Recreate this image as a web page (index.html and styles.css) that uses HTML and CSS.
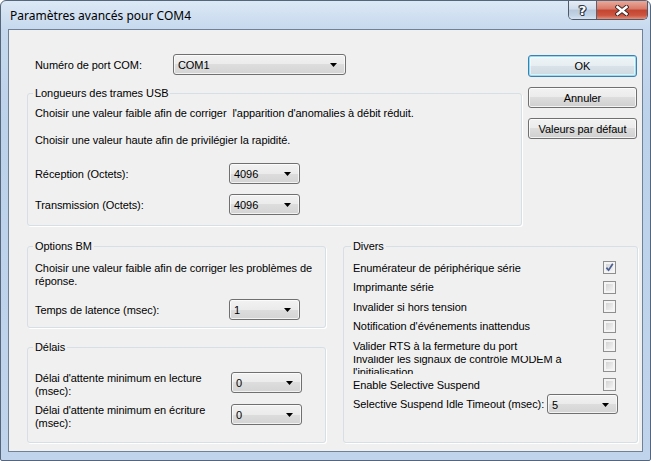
FILE: index.html
```html
<!DOCTYPE html>
<html lang="fr">
<head>
<meta charset="utf-8">
<title>Paramètres avancés pour COM4</title>
<link rel="stylesheet" href="styles.css">
</head>
<body>
<div class="window">
  <div class="titlebar">
    <span class="title">Paramètres avancés pour COM4</span>
    <div class="caption-btns">
      <div class="cbtn help"><span>?</span></div>
      <div class="cbtn close">
        <svg width="14" height="11" viewBox="0 0 14 11"><path d="M2.5 2 L11.5 9 M11.5 2 L2.5 9" stroke="#3b2a2a" stroke-width="4.4" stroke-linecap="square" fill="none"/><path d="M2.5 2 L11.5 9 M11.5 2 L2.5 9" stroke="#fff" stroke-width="2.4" stroke-linecap="square" fill="none"/></svg>
      </div>
    </div>
  </div>
  <div class="client">
    <div class="top">
      <div class="top-left">
        <div class="port-row">
          <span class="port-label">Numéro de port COM:</span>
          <div class="combo combo-wide"><span>COM1</span><svg class="arrow" width="7" height="4" viewBox="0 0 7 4"><path d="M0 0 H7 L3.5 4 Z" fill="#000"/></svg></div>
        </div>
        <fieldset class="group usb">
          <legend>Longueurs des trames USB</legend>
          <p class="line">Choisir une valeur faible afin de corriger &nbsp;l'apparition d'anomalies à débit réduit.</p>
          <p class="line second">Choisir une valeur haute afin de privilégier la rapidité.</p>
          <div class="row row-first">
            <span class="row-label">Réception (Octets):</span>
            <div class="combo"><span>4096</span><svg class="arrow" width="7" height="4" viewBox="0 0 7 4"><path d="M0 0 H7 L3.5 4 Z" fill="#000"/></svg></div>
          </div>
          <div class="row row-next">
            <span class="row-label">Transmission (Octets):</span>
            <div class="combo"><span>4096</span><svg class="arrow" width="7" height="4" viewBox="0 0 7 4"><path d="M0 0 H7 L3.5 4 Z" fill="#000"/></svg></div>
          </div>
        </fieldset>
      </div>
      <div class="buttons">
        <div class="btn btn-default">OK</div>
        <div class="btn">Annuler</div>
        <div class="btn">Valeurs par défaut</div>
      </div>
    </div>
    <div class="bottom">
      <div class="col-left">
        <fieldset class="group bm">
          <legend>Options BM</legend>
          <p class="line">Choisir une valeur faible afin de corriger les problèmes de<br>réponse.</p>
          <div class="row row-latency">
            <span class="row-label">Temps de latence (msec):</span>
            <div class="combo"><span>1</span><svg class="arrow" width="7" height="4" viewBox="0 0 7 4"><path d="M0 0 H7 L3.5 4 Z" fill="#000"/></svg></div>
          </div>
        </fieldset>
        <fieldset class="group delais">
          <legend>Délais</legend>
          <div class="trow">
            <span class="trow-label">Délai d'attente minimum en lecture<br>(msec):</span>
            <div class="combo"><span>0</span><svg class="arrow" width="7" height="4" viewBox="0 0 7 4"><path d="M0 0 H7 L3.5 4 Z" fill="#000"/></svg></div>
          </div>
          <div class="trow trow-next">
            <span class="trow-label">Délai d'attente minimum en écriture<br>(msec):</span>
            <div class="combo"><span>0</span><svg class="arrow" width="7" height="4" viewBox="0 0 7 4"><path d="M0 0 H7 L3.5 4 Z" fill="#000"/></svg></div>
          </div>
        </fieldset>
      </div>
      <fieldset class="group divers">
        <legend>Divers</legend>
        <div class="crow"><span>Enumérateur de périphérique série</span><span class="cb checked"><svg width="9" height="9" viewBox="0 0 9 9"><path d="M1.4 4.6 L3.6 7.2 L7.8 0.8" stroke="#4b5f95" stroke-width="1.7" fill="none"/></svg></span></div>
        <div class="crow"><span>Imprimante série</span><span class="cb"></span></div>
        <div class="crow"><span>Invalider si hors tension</span><span class="cb"></span></div>
        <div class="crow"><span>Notification d'événements inattendus</span><span class="cb"></span></div>
        <div class="crow"><span>Valider RTS à la fermeture du port</span><span class="cb"></span></div>
        <div class="crow"><div class="clip"><div class="clip-text">Invalider les signaux de contrôle MODEM à<br>l'initialisation</div></div><span class="cb"></span></div>
        <div class="crow"><span>Enable Selective Suspend</span><span class="cb"></span></div>
        <div class="crow"><span>Selective Suspend Idle Timeout (msec):</span>
          <div class="combo combo-sel"><span>5</span><svg class="arrow" width="7" height="4" viewBox="0 0 7 4"><path d="M0 0 H7 L3.5 4 Z" fill="#000"/></svg></div>
        </div>
      </fieldset>
    </div>
  </div>
</div>
</body>
</html>
```
FILE: styles.css
```css
* { box-sizing: border-box; }

body {
  margin: 0;
  background: #ffffff;
  font-family: "Liberation Sans", Arial, sans-serif;
  font-size: 11px;
  letter-spacing: -0.07px;
  color: #000;
}

.window {
  width: 651px;
  height: 461px;
  border: 1px solid #55657a;
  border-radius: 6px 6px 2px 2px;
  background: linear-gradient(#dce8f5 0px, #c6d9ee 28px, #bcd2ea 120px, #c0d5ec 461px);
  display: flex;
  flex-direction: column;
  padding: 0 7px 8px 7px;
}

.titlebar {
  height: 28px;
  display: flex;
  justify-content: space-between;
  align-items: flex-start;
}

.title {
  font-family: "Noto Sans", "Open Sans", sans-serif;
  font-size: 12px;
  line-height: 16px;
  letter-spacing: 0;
  margin: 7px 0 0 2px;
  color: #000;
}

.caption-btns {
  display: flex;
  margin-right: -5px;
  height: 19px;
  border: 1px solid #4f5968;
  border-top: none;
  border-radius: 0 0 5px 5px;
  overflow: hidden;
}

.cbtn {
  height: 18px;
  display: flex;
  align-items: center;
  justify-content: center;
}

.help {
  width: 28px;
  border-right: 1px solid #5a6270;
  background: linear-gradient(#e6edf5 0%, #d0dceb 45%, #b8c8dc 50%, #c3d3e6 80%, #d6e3f1 100%);
}

.help span {
  font-family: "DejaVu Sans", sans-serif;
  font-weight: bold;
  font-size: 13px;
  line-height: 13px;
  color: #fff;
  text-shadow: 1px 0 0 #2f3a48, -1px 0 0 #2f3a48, 0 1px 0 #2f3a48, 0 -1px 0 #2f3a48, 1px 1px 0 #2f3a48, -1px -1px 0 #2f3a48;
}

.close {
  width: 50px;
  background: linear-gradient(#eaa999 0%, #d87868 45%, #c4442f 50%, #cc5641 80%, #e58f7a 100%);
}

.close svg { display: block; }

.client {
  height: 423px;
  border: 1px solid #6f8196;
  background: #f0f0f0;
  padding: 24px 4px 0 18px;
}

.top {
  display: flex;
  gap: 6px;
}

.top-left {
  width: 495px;
}

.port-row {
  display: flex;
  align-items: center;
  height: 21px;
  padding-left: 8px;
}

.port-label {
  width: 138px;
}

/* combobox */
.combo {
  width: 71px;
  height: 21px;
  border: 1px solid #707070;
  border-radius: 3px;
  background: linear-gradient(#f2f2f2 0%, #ebebeb 50%, #dddddd 50%, #d4d4d4 100%);
  box-shadow: inset 0 0 0 1px rgba(255, 255, 255, 0.7);
  display: flex;
  align-items: center;
  justify-content: space-between;
  padding: 1px 8px 0 4px;
  flex-shrink: 0;
}

.combo-wide { width: 173px; }

.arrow { display: block; }

/* group boxes */
.group {
  margin: 0;
  border: 1px solid #d5dfe5;
  border-radius: 3px;
  box-shadow: 1px 1px 0 #ffffff;
  padding: 0 10px 0 7px;
  min-width: 0;
}

.group legend {
  padding: 0 2px;
  margin-left: -2px;
  line-height: 13px;
}

.line {
  margin: 0;
  line-height: 13px;
  white-space: nowrap;
}

.usb {
  margin-top: 12px;
  padding-top: 7px;
  padding-bottom: 10px;
}

.usb .second { margin-top: 14px; }

.row {
  display: flex;
  align-items: center;
}

.row-label { width: 194px; }

.row-first { margin-top: 16px; }
.row-next { margin-top: 10px; }

/* buttons */
.buttons {
  width: 109px;
  margin-top: 1px;
  display: flex;
  flex-direction: column;
}

.btn {
  height: 21px;
  border: 1px solid #707070;
  border-radius: 3px;
  background: linear-gradient(#f2f2f2 0%, #ebebeb 50%, #dddddd 50%, #cfcfcf 100%);
  box-shadow: inset 0 0 0 1px rgba(255, 255, 255, 0.75);
  display: flex;
  align-items: center;
  justify-content: center;
  margin-top: 10px;
}

.btn-default {
  height: 22px;
  margin-top: 0;
  border-color: #3c7fb1;
  box-shadow: inset 0 0 0 1px #8fdcf6, inset 0 0 0 2px rgba(255, 255, 255, 0.5);
  background: linear-gradient(#eef4f7 0%, #e7eef2 50%, #d9e2e8 50%, #cfd9e0 100%);
}

/* bottom area */
.bottom {
  display: flex;
  gap: 17px;
  margin-top: 14px;
}

.col-left {
  width: 299px;
  display: flex;
  flex-direction: column;
}

.bm {
  padding-top: 9px;
  padding-bottom: 7px;
}

.row-latency { margin-top: 11px; }

.delais {
  margin-top: 13px;
  padding-top: 18px;
  padding-bottom: 12px;
}

.trow {
  display: flex;
  align-items: flex-start;
  height: 26px;
}

.trow-next { margin-top: 6px; }

.trow-label {
  width: 196px;
  line-height: 13px;
  white-space: nowrap;
}

.divers {
  width: 295px;
  padding: 5px 21px 0 9px;
}

.crow {
  height: 19.5px;
  display: flex;
  align-items: center;
  justify-content: space-between;
  white-space: nowrap;
}

.clip {
  height: 18px;
  overflow: hidden;
  align-self: flex-start;
}

.clip-text {
  margin-top: -3px;
  line-height: 13px;
}

.cb {
  width: 13px;
  height: 13px;
  border: 1px solid #8f8f8f;
  padding: 1px;
  background: linear-gradient(135deg, #d0d0d0 0%, #f7f7f7 100%) content-box, #f4f4f4;
  box-shadow: inset 0 0 0 2px #f4f4f4;
  display: flex;
  align-items: center;
  justify-content: center;
  flex-shrink: 0;
}

.cb svg { display: block; }

.combo-sel {
  height: 20px;
  margin-right: -2px;
}
```
